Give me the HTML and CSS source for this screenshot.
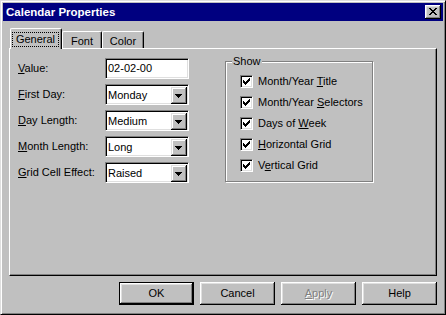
FILE: index.html
```html
<!DOCTYPE html>
<html>
<head>
<meta charset="utf-8">
<title>Calendar Properties</title>
<link rel="stylesheet" href="styles.css">
</head>
<body>
<div class="window">
  <div class="titlebar">
    <span class="title">Calendar Properties</span>
    <div class="close">
      <svg width="8" height="7" viewBox="0 0 8 7" shape-rendering="crispEdges"><path d="M0 0h2v1H0zM6 0h2v1H6zM1 1h2v1H1zM5 1h2v1H5zM2 2h4v1H2zM3 3h2v1H3zM2 4h4v1H2zM1 5h2v1H1zM5 5h2v1H5zM0 6h2v1H0zM6 6h2v1H6z" fill="#000"/></svg>
    </div>
  </div>

  <div class="tabs">
    <div class="tab tab-active tab-general"><span class="focus">General</span></div>
    <div class="tab tab-font">Font</div>
    <div class="tab tab-color">Color</div>
  </div>

  <div class="panel">
    <div class="form">
      <div class="row">
        <span class="label"><u>V</u>alue:</span>
        <div class="field">02-02-00</div>
      </div>
      <div class="row">
        <span class="label"><u>F</u>irst Day:</span>
        <div class="field combo"><span class="combo-text">Monday</span><span class="drop"><svg width="7" height="4" viewBox="0 0 7 4" shape-rendering="crispEdges"><path d="M0 0h7v1H0zM1 1h5v1H1zM2 2h3v1H2zM3 3h1v1H3z" fill="#000"/></svg></span></div>
      </div>
      <div class="row">
        <span class="label"><u>D</u>ay Length:</span>
        <div class="field combo"><span class="combo-text">Medium</span><span class="drop"><svg width="7" height="4" viewBox="0 0 7 4" shape-rendering="crispEdges"><path d="M0 0h7v1H0zM1 1h5v1H1zM2 2h3v1H2zM3 3h1v1H3z" fill="#000"/></svg></span></div>
      </div>
      <div class="row">
        <span class="label"><u>M</u>onth Length:</span>
        <div class="field combo"><span class="combo-text">Long</span><span class="drop"><svg width="7" height="4" viewBox="0 0 7 4" shape-rendering="crispEdges"><path d="M0 0h7v1H0zM1 1h5v1H1zM2 2h3v1H2zM3 3h1v1H3z" fill="#000"/></svg></span></div>
      </div>
      <div class="row">
        <span class="label"><u>G</u>rid Cell Effect:</span>
        <div class="field combo"><span class="combo-text">Raised</span><span class="drop"><svg width="7" height="4" viewBox="0 0 7 4" shape-rendering="crispEdges"><path d="M0 0h7v1H0zM1 1h5v1H1zM2 2h3v1H2zM3 3h1v1H3z" fill="#000"/></svg></span></div>
      </div>
    </div>

    <div class="group">
      <span class="legend">Show</span>
      <div class="check"><span class="box"><svg width="7" height="7" viewBox="0 0 7 7" shape-rendering="crispEdges"><path d="M6 0h1v1H6zM5 1h2v1H5zM0 2h1v1H0zM4 2h3v1H4zM0 3h2v1H0zM3 3h3v1H3zM0 4h5v1H0zM1 5h3v1H1zM2 6h1v1H2z" fill="#000"/></svg></span><span class="check-label">Month/Year <u>T</u>itle</span></div>
      <div class="check"><span class="box"><svg width="7" height="7" viewBox="0 0 7 7" shape-rendering="crispEdges"><path d="M6 0h1v1H6zM5 1h2v1H5zM0 2h1v1H0zM4 2h3v1H4zM0 3h2v1H0zM3 3h3v1H3zM0 4h5v1H0zM1 5h3v1H1zM2 6h1v1H2z" fill="#000"/></svg></span><span class="check-label">Month/Year <u>S</u>electors</span></div>
      <div class="check"><span class="box"><svg width="7" height="7" viewBox="0 0 7 7" shape-rendering="crispEdges"><path d="M6 0h1v1H6zM5 1h2v1H5zM0 2h1v1H0zM4 2h3v1H4zM0 3h2v1H0zM3 3h3v1H3zM0 4h5v1H0zM1 5h3v1H1zM2 6h1v1H2z" fill="#000"/></svg></span><span class="check-label">Days of <u>W</u>eek</span></div>
      <div class="check"><span class="box"><svg width="7" height="7" viewBox="0 0 7 7" shape-rendering="crispEdges"><path d="M6 0h1v1H6zM5 1h2v1H5zM0 2h1v1H0zM4 2h3v1H4zM0 3h2v1H0zM3 3h3v1H3zM0 4h5v1H0zM1 5h3v1H1zM2 6h1v1H2z" fill="#000"/></svg></span><span class="check-label"><u>H</u>orizontal Grid</span></div>
      <div class="check"><span class="box"><svg width="7" height="7" viewBox="0 0 7 7" shape-rendering="crispEdges"><path d="M6 0h1v1H6zM5 1h2v1H5zM0 2h1v1H0zM4 2h3v1H4zM0 3h2v1H0zM3 3h3v1H3zM0 4h5v1H0zM1 5h3v1H1zM2 6h1v1H2z" fill="#000"/></svg></span><span class="check-label">V<u>e</u>rtical Grid</span></div>
    </div>
  </div>

  <div class="buttons">
    <div class="btn btn-default">OK</div>
    <div class="btn">Cancel</div>
    <div class="btn btn-disabled"><u>A</u>pply</div>
    <div class="btn">Help</div>
  </div>
</div>
</body>
</html>
```

FILE: styles.css
```css
* {
  box-sizing: border-box;
}

html, body {
  margin: 0;
  padding: 0;
  background: #c0c0c0;
}

body {
  font-family: "Liberation Sans", Arial, sans-serif;
  font-size: 11px;
  line-height: 13px;
  color: #000;
}

u {
  text-decoration: underline;
  text-underline-offset: 1px;
}

.window {
  width: 446px;
  height: 315px;
  background: #c0c0c0;
  border: 1px solid;
  border-color: #dfdfdf #000 #000 #dfdfdf;
  box-shadow: inset 1px 1px #fff, inset -1px -1px #808080;
  padding: 2px;
  display: flex;
  flex-direction: column;
}

/* title bar */
.titlebar {
  height: 18px;
  background: #000080;
  display: flex;
  align-items: center;
  justify-content: space-between;
  padding: 0 2px 0 3px;
}

.title {
  color: #fff;
  font-weight: bold;
  font-size: 11.5px;
}

.close {
  width: 16px;
  height: 14px;
  background: #c0c0c0;
  box-shadow: inset -1px -1px #000, inset 1px 1px #fff, inset -2px -2px #808080, inset 2px 2px #dfdfdf;
  display: flex;
  align-items: center;
  justify-content: center;
  padding: 0 1px 1px 0;
}

.close svg {
  display: block;
}

/* tabs */
.tabs {
  height: 20px;
  margin-top: 7px;
  padding-left: 7px;
  display: flex;
  align-items: flex-end;
}

.tab {
  height: 17px;
  border-top: 1px solid #fff;
  border-left: 1px solid #fff;
  border-right: 1px solid #000;
  border-radius: 2px 2px 0 0;
  box-shadow: inset -1px 0 #808080;
  display: flex;
  justify-content: center;
  padding-top: 3px;
  background: #c0c0c0;
}

.tab-general { width: 52px; }
.tab-font { width: 40px; }
.tab-color { width: 42px; }

.tab-active {
  height: 21px;
  margin-bottom: -1px;
  position: relative;
  z-index: 1;
  padding: 3px 2px 2px 1px;
}

.focus {
  flex: 1;
  height: 15px;
  border: 1px dotted #000;
  display: flex;
  justify-content: center;
  line-height: 11px;
  padding-top: 1px;
}

/* panel */
.panel {
  height: 228px;
  margin: 0 6px;
  border: 1px solid;
  border-color: #fff #000 #000 #fff;
  box-shadow: inset -1px -1px #808080;
  padding: 9px 8px 0 8px;
  display: flex;
  align-items: flex-start;
}

.form {
  width: 171px;
  display: flex;
  flex-direction: column;
  gap: 5px;
}

.row {
  height: 21px;
  display: flex;
  align-items: center;
}

.label {
  width: 87px;
}

.field {
  width: 84px;
  height: 21px;
  background: #fff;
  border: 1px solid;
  border-color: #808080 #fff #fff #808080;
  box-shadow: inset 1px 1px #000, inset -1px -1px #dfdfdf;
  padding: 0 2px;
  display: flex;
  align-items: center;
}

.combo {
  padding: 1px 1px 1px 2px;
  align-items: stretch;
}

.combo-text {
  flex: 1;
  display: flex;
  align-items: center;
  padding-top: 1px;
}

.drop {
  width: 16px;
  height: 17px;
  margin-top: 1px;
  background: #c0c0c0;
  box-shadow: inset -1px -1px #000, inset 1px 1px #dfdfdf, inset -2px -2px #808080, inset 2px 2px #fff;
  display: flex;
  align-items: center;
  justify-content: center;
  padding: 0 1px 0 0;
}

.drop svg {
  display: block;
}

/* group box */
.group {
  position: relative;
  width: 148px;
  height: 121px;
  margin-left: 36px;
  margin-top: 3px;
  border: 1px solid #808080;
  box-shadow: 1px 1px 0 #fff, inset 1px 1px 0 #fff;
  padding: 13px 0 0 14px;
  display: flex;
  flex-direction: column;
  gap: 8px;
}

.legend {
  position: absolute;
  top: -7px;
  left: 6px;
  padding: 0 1px;
  background: #c0c0c0;
}

.check {
  height: 13px;
  display: flex;
  align-items: center;
}

.box {
  width: 13px;
  height: 13px;
  background: #fff;
  border: 1px solid;
  border-color: #808080 #fff #fff #808080;
  box-shadow: inset 1px 1px #000, inset -1px -1px #dfdfdf;
  display: flex;
  align-items: center;
  justify-content: center;
}

.box svg {
  display: block;
}

.check-label {
  margin-left: 5px;
}

/* buttons */
.buttons {
  margin-top: 6px;
  padding-right: 6px;
  display: flex;
  justify-content: flex-end;
  gap: 6px;
}

.btn {
  width: 75px;
  height: 23px;
  background: #c0c0c0;
  box-shadow: inset -1px -1px #000, inset 1px 1px #fff, inset -2px -2px #808080, inset 2px 2px #dfdfdf;
  display: flex;
  align-items: center;
  justify-content: center;
}

.btn-default {
  border: 1px solid #000;
}

.btn-disabled {
  color: #808080;
  text-shadow: 1px 1px 0 #fff;
}
```
